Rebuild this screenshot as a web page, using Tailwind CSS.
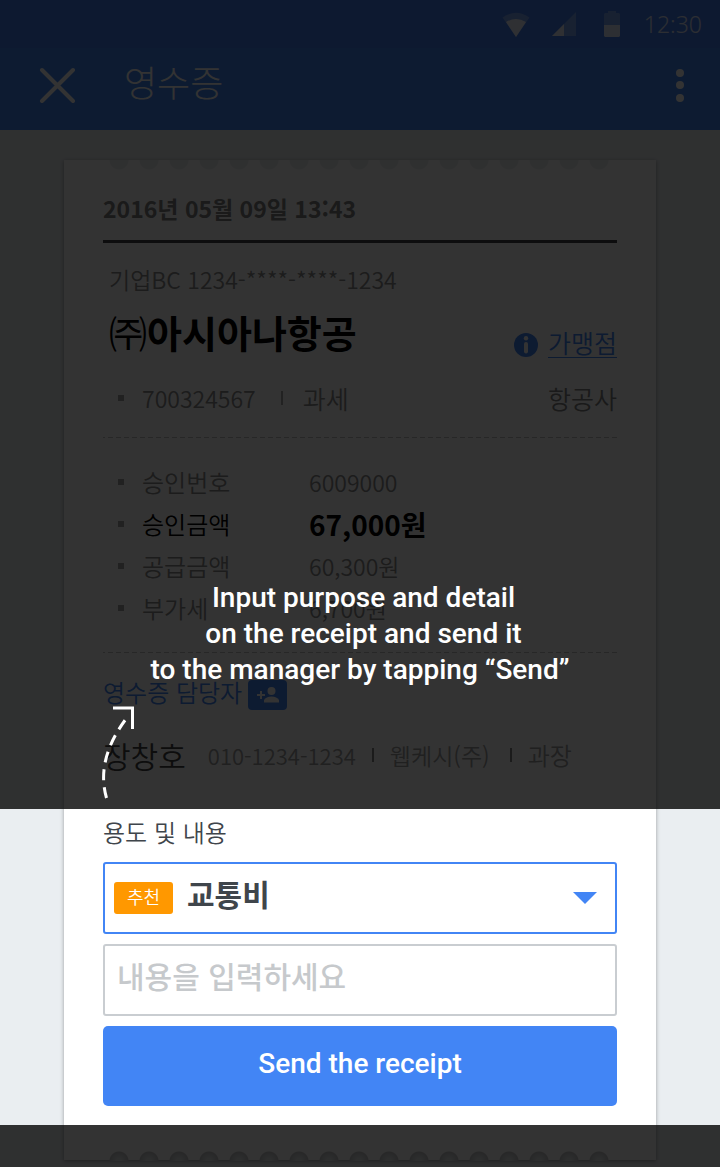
<!DOCTYPE html>
<html lang="ko">
<head>
<meta charset="utf-8">
<meta name="viewport" content="width=device-width, initial-scale=1">
<title>영수증</title>
<script src="https://cdn.jsdelivr.net/npm/@tailwindcss/browser@4"></script>
</head>
<body class="bg-[#eaeef1] font-['Noto_Sans_CJK_KR',sans-serif] font-[350] text-[#8c8c8c]">
<div class="relative min-h-screen pb-[7px]">

  <header class="text-white">
    <div class="flex h-12 items-center justify-end bg-[#417cee] pr-[18px]">
      <svg class="mr-[22px] h-7 w-7" viewBox="0 0 28 28" fill="#fff" aria-hidden="true">
        <path opacity=".3" d="M0.500 7.500Q14 -2 27.500 7.500L14 27z"/>
        <path opacity=".85" d="M4 12Q14 6 24 12L14 27z"/>
      </svg>
      <svg class="mr-7 h-6 w-6" viewBox="0 0 24 24" fill="#fff" aria-hidden="true">
        <path opacity=".3" d="M24 0V24H0z"/>
        <path opacity=".85" d="M12 12V24H0z"/>
      </svg>
      <svg class="mr-6 h-[26px] w-4" viewBox="0 0 16 26" fill="#fff" aria-hidden="true">
        <path opacity=".3" d="M4 0h8v2h3l1 1v11H0V3l1-1h3z"/>
        <path opacity=".85" d="M0 14h16v11l-1 1H1l-1-1z"/>
      </svg>
      <time class="font-['Noto_Sans',sans-serif] text-[23px] leading-none text-white/80">12:30</time>
    </div>
    <div class="flex h-[82px] items-center bg-[#4287f5] pr-[28px] pl-[39px]">
      <button type="button" aria-label="닫기" class="mb-2">
        <svg class="h-9 w-9" viewBox="0 0 36 36" fill="none" stroke="#fff" stroke-width="4" stroke-linecap="round"><path d="M3 3L34 34M34 3L3 34"/></svg>
      </button>
      <h1 class="mb-4 ml-[49px] flex-1 text-[36px] leading-none font-light">영수증</h1>
      <button type="button" aria-label="더보기" class="px-2 pb-[6px]">
        <svg class="h-[34px] w-2" viewBox="0 0 8 34" fill="#fff"><circle cx="4" cy="4" r="4"/><circle cx="4" cy="16" r="4"/><circle cx="4" cy="29" r="4"/></svg>
      </button>
    </div>
  </header>

  <main class="relative mx-16 mt-[30px] bg-white px-[39px] pt-7 pb-[54px] shadow-[0_1px_4px_rgba(0,0,0,0.35)]">
    <div class="absolute top-0 right-[42px] left-10 h-[10px] bg-[radial-gradient(circle_at_15px_0px,#eaeef1_9px,transparent_10px)] bg-[length:30px_10px]"></div>
    <div class="absolute right-[42px] bottom-[-1px] left-10 h-[11px] bg-[radial-gradient(circle_at_15px_11px,#dfe3e5_3px,#c4c6c8_9px,transparent_10px)] bg-[length:30px_11px]"></div>

    <p class="text-[23px] leading-10 font-bold text-[#808080]"><time>2016년 05월 09일 13:43</time></p>
    <hr class="mt-3 h-[3px] border-0 bg-[#404448]">
    <p class="mt-4 pl-[6px] text-[23px] leading-10">기업BC 1234-****-****-1234</p>
    <div class="mt-px flex h-16 items-center pl-[6px] text-black">
      <h2 class="flex-1 text-[38px] leading-[64px] font-bold"><span class="font-normal">㈜</span>아시아나항공</h2>
      <a href="#" class="mt-5 flex items-center gap-[10px] text-[#4285f5]">
        <svg class="mt-[6px] h-6 w-6" viewBox="0 0 24 24" aria-hidden="true"><circle cx="12" cy="12" r="12" fill="#4285f5"/><circle cx="12" cy="5.200" r="2.200" fill="#fff"/><rect x="10" y="9" width="4" height="11.500" rx="2" fill="#fff"/></svg>
        <span class="border-b border-[#4285f5] text-[25px] leading-[30px]">가맹점</span>
      </a>
    </div>
    <div class="mt-[14px] flex items-center pl-[15px] text-[25px] leading-10">
      <span class="mr-[18px] size-[6px] bg-[#a5a5a5]"></span>
      <span class="text-[23px]">700324567</span>
      <span class="mr-5 ml-[25px] h-[14px] w-[2px] bg-[#aaa]"></span>
      <span class="flex-1">과세</span>
      <span class="text-[#808080]">항공사</span>
    </div>

    <div class="mt-[19px] h-px bg-[repeating-linear-gradient(90deg,#c0c0c0_0_2px,transparent_2px_5px,#c0c0c0_5px_8px)]"></div>

    <dl class="my-[23px] pl-[15px] text-2xl leading-[42px]">
      <div class="flex items-center"><span class="mr-[18px] size-[6px] bg-[#a5a5a5]"></span><dt class="w-[167px]">승인번호</dt><dd class="text-[23px]">6009000</dd></div>
      <div class="flex items-center text-black"><span class="mr-[18px] size-[6px] bg-[#a5a5a5]"></span><dt class="w-[167px]">승인금액</dt><dd class="text-[28px] font-bold">67,000원</dd></div>
      <div class="flex items-center"><span class="mr-[18px] size-[6px] bg-[#a5a5a5]"></span><dt class="w-[167px]">공급금액</dt><dd class="text-[23px]">60,300원</dd></div>
      <div class="flex items-center"><span class="mr-[18px] size-[6px] bg-[#a5a5a5]"></span><dt class="w-[167px]">부가세</dt><dd class="text-[23px]">6,700원</dd></div>
    </dl>

    <div class="h-px bg-[repeating-linear-gradient(90deg,#c0c0c0_0_2px,transparent_2px_5px,#c0c0c0_5px_8px)]"></div>

    <div class="mt-[19px] flex h-10 items-center text-2xl leading-10 text-[#4285f5]">
      <h3>영수증 담당자</h3>
      <button type="button" aria-label="담당자 추가" class="mt-[6px] ml-[6px] flex h-[30px] w-[39px] items-center justify-center rounded-[4px] bg-[#4285f5]">
        <svg class="h-4 w-6" viewBox="0 0 24 16" fill="#fff"><circle cx="15.500" cy="4" r="4"/><path d="M8 15.500V13Q10 9.500 15.500 9.500T23 13V15.500z"/><path d="M1 7h3V4h2v3h3v2H6v3H4V9H1z"/></svg>
      </button>
    </div>
    <div class="mt-[19px] flex h-12 items-center text-2xl leading-[48px] text-[#a0a0a0]">
      <strong class="text-[30px] font-[350] text-[#444]">장창호</strong>
      <span class="ml-[22px] text-[22px]">010-1234-1234</span>
      <span class="mx-4 h-[14px] w-[2px] bg-[#888]"></span>
      <span class="text-[23px]">웹케시(주)</span>
      <span class="mr-4 ml-5 h-[14px] w-[2px] bg-[#888]"></span>
      <span>과장</span>
    </div>

    <form class="mt-[33px] text-[#3f454b]">
      <label for="purpose" class="block text-2xl leading-10">용도 및 내용</label>
      <div class="relative mt-[10px] flex h-[72px] items-center rounded-[3px] border-2 border-[#4285f5] pl-[9px]">
        <span class="flex h-8 w-[59px] items-center justify-center rounded-[3px] bg-[#ff9800] pb-1 text-lg leading-none text-white">추천</span>
        <select id="purpose" class="h-full flex-1 appearance-none bg-transparent pb-[10px] pl-[14px] text-[30px] font-bold outline-none"><option>교통비</option></select>
        <svg class="pointer-events-none absolute right-[18px] h-3 w-6" viewBox="0 0 24 12" fill="#4285f5" aria-hidden="true"><path d="M0 0H24L12 12z"/></svg>
      </div>
      <input type="text" aria-label="내용" placeholder="내용을 입력하세요" class="mt-[10px] block h-[72px] w-full rounded-[3px] border-2 border-[#c9cdd1] px-3 pb-[10px] text-[30px] font-medium outline-none placeholder:text-[#c6c9cc]">
      <button type="button" class="mt-[10px] block h-20 w-full rounded-[5px] bg-[#4285f5] pb-1 font-['Roboto',sans-serif] text-[28px] font-medium text-white">Send the receipt</button>
    </form>
  </main>

  <!-- Coach-mark layer: dims everything except the form -->
  <div class="absolute inset-x-0 top-0 h-[809px] bg-black/80">
    <p class="absolute inset-x-0 bottom-[121px] text-center font-['Roboto',sans-serif] text-[28px] leading-9 font-medium text-white">&nbsp;Input purpose and detail<br>&nbsp;on the receipt and send it<br>to the manager by tapping “Send”</p>
    <svg class="absolute bottom-[7px] left-[98px] h-[98px] w-10" viewBox="0 0 40 98" fill="none" stroke="#fff" stroke-width="3" aria-hidden="true">
      <path d="M8.500 94Q-3 54 31 11" stroke-dasharray="11 7"/>
      <path d="M15 4H34.500V25"/>
    </svg>
  </div>
  <div class="absolute inset-x-0 top-[1125px] bottom-0 bg-black/80"></div>
</div>
</body>
</html>
